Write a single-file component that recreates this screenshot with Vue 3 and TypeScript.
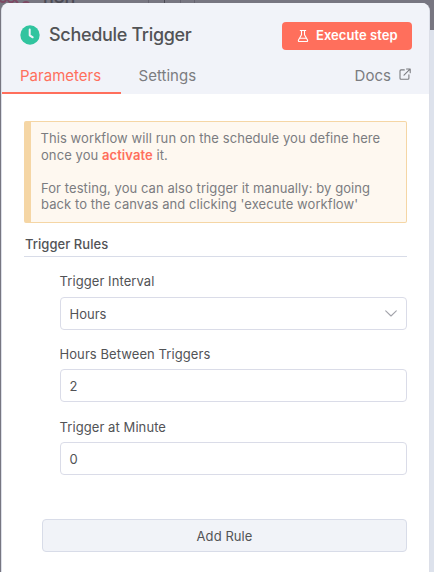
<script setup lang="ts">
import { ref } from 'vue'

interface NumberField {
  label: string
  value: string
}

const interval = ref('Hours')
const fields = ref<NumberField[]>([
  { label: 'Hours Between Triggers', value: '2' },
  { label: 'Trigger at Minute', value: '0' },
])
</script>

<template>
  <div class="screen">
    <div class="backdrop">
      <svg class="backdrop-logo" width="32" height="4" viewBox="0 0 32 4" fill="none" stroke="#7d4964" stroke-width="2">
        <circle cx="3" cy="-1" r="3" />
        <circle cx="11" cy="-1" r="3.2" />
        <path d="M15 0l3 3" />
        <circle cx="26" cy="5" r="3" />
      </svg>
      <span class="backdrop-name">n8n</span>
      <i class="tick tick-a"></i><i class="tick tick-b"></i><i class="tick tick-c"></i><i class="tick tick-d"></i>
    </div>
    <div class="side"></div>

    <section class="panel">
      <header class="header">
        <div class="title-row">
          <svg class="clock" width="20" height="20" viewBox="0 0 20 20">
            <circle cx="10" cy="10" r="9.7" fill="#31c49f" />
            <path d="M9.7 4.4v5.9l3 2" fill="none" stroke="#f1f3f9" stroke-width="2" stroke-linecap="round" stroke-linejoin="round" />
          </svg>
          <h1 class="title">Schedule Trigger</h1>
          <button class="execute" type="button">
            <svg width="12" height="14" viewBox="0 0 12 14" fill="none" stroke="currentColor" stroke-width="1.1" stroke-linecap="round" stroke-linejoin="round">
              <path d="M3.300 1.500h5.400M4.500 1.500v4.200L1.500 11.100c-.4.800 0 1.400.8 1.400h7.400c.8 0 1.200-.6.8-1.400L7.500 5.700V1.500M2.700 9.300h6.600" />
            </svg>
            <span>Execute step</span>
          </button>
        </div>
        <nav class="tabs">
          <a class="tab active">Parameters</a>
          <a class="tab">Settings</a>
          <a class="docs">
            <span>Docs</span>
            <svg width="12" height="12" viewBox="0 0 12 12" fill="none" stroke="currentColor" stroke-width="1.1" stroke-linecap="round" stroke-linejoin="round">
              <path d="M7.500 1h3.700v3.700M11 1.200L5 7.200M5.300 1.900H2Q1 1.900 1 2.900V10.200Q1 11.200 2 11.200H8.900Q9.900 11.200 9.900 10.200V6.700" />
            </svg>
          </a>
        </nav>
      </header>

      <main class="content">
        <div class="notice">
          This workflow will run on the schedule you define here<br />once you <a class="activate">activate</a> it.<br /><br />For testing, you can also trigger it manually: by going<br />back to the canvas and clicking 'execute workflow'
        </div>
        <h2 class="rules-title">Trigger Rules</h2>
        <div class="rules">
          <div class="field">
            <label class="label">Trigger Interval</label>
            <div class="control">
              <span>{{ interval }}</span>
              <svg width="12" height="7" viewBox="0 0 12 7" fill="none" stroke="#a2a3aa" stroke-width="1.1" stroke-linecap="round" stroke-linejoin="round">
                <path d="M.7.8L6 6L11.300.8" />
              </svg>
            </div>
          </div>
          <div v-for="field in fields" :key="field.label" class="field">
            <label class="label">{{ field.label }}</label>
            <div class="control">{{ field.value }}</div>
          </div>
        </div>
        <button class="add" type="button">Add Rule</button>
      </main>
    </section>
  </div>
</template>

<style>
body {
  margin: 0;
  overflow: hidden;
}
</style>

<style scoped>
* {
  box-sizing: border-box;
}
.screen {
  position: relative;
  width: 434px;
  height: 572px;
  padding: 3px 5px 0 1px;
  overflow: hidden;
  background: #777681;
  font-family: Inter, sans-serif;
  color: #525356;
}
.backdrop {
  position: absolute;
  inset: 0 0 auto;
  height: 12px;
  overflow: hidden;
}
.backdrop-logo {
  position: absolute;
  left: 0;
  top: 0;
}
.backdrop-name {
  position: absolute;
  left: 43px;
  top: -13px;
  font-size: 18px;
  line-height: 20px;
  font-weight: 500;
  letter-spacing: -0.3px;
  color: #4b4a54;
}
.tick {
  position: absolute;
  top: 0;
  width: 1px;
  height: 3px;
  background: #65636f;
}
.tick-a { left: 148px; }
.tick-b { left: 164px; background: #4b4a54; }
.tick-c { left: 180px; }
.tick-d { left: 194px; }
.side {
  position: absolute;
  top: 30px;
  right: 0;
  bottom: 0;
  width: 6px;
  background: #dde2ec;
}
.panel {
  position: relative;
  width: 429px;
  height: 569px;
  border: solid #dcdfe8;
  border-width: 0 1px;
  border-radius: 8px 8px 0 0;
  background: #fff;
  overflow: hidden;
}
.header {
  height: 91px;
  background: #f1f3f9;
}
.title-row {
  display: flex;
  align-items: center;
  height: 53px;
  padding: 12px 17px 0 18px;
}
.clock {
  margin-top: -2px;
}
.title {
  margin: -1px 0 0 9px;
  font-size: 18px;
  line-height: 24px;
  font-weight: 500;
  letter-spacing: -0.32px;
}
.execute {
  display: flex;
  align-items: center;
  gap: 7px;
  width: 130px;
  height: 28px;
  margin-left: auto;
  padding: 0 0 0 15px;
  border: 0;
  border-radius: 4px;
  background: #ff6f5c;
  color: #fff;
  font: 600 13px/20px Inter, sans-serif;
  letter-spacing: 0.05px;
}
.execute span {
  margin-top: -1px;
}
.tabs {
  display: flex;
  height: 38px;
  font-size: 15px;
  line-height: 20px;
  letter-spacing: 0.02px;
  color: #7b7c80;
}
.tab {
  padding: 10px 17.5px 0;
}
.tab.active {
  width: 119px;
  padding-left: 18px;
  border-bottom: 2px solid #ff6f5c;
  color: #ff6f5c;
}
.docs {
  display: flex;
  align-items: flex-start;
  gap: 8px;
  margin-left: auto;
  padding: 10px 18px 0 0;
}
.docs svg {
  margin-top: 2px;
}
.content {
  display: flex;
  flex-direction: column;
  padding: 27px 22px 0;
}
.notice {
  height: 102px;
  padding: 8px 0 0 10px;
  border: 1px solid #f5d6a5;
  border-left-width: 7px;
  border-radius: 2px;
  background: #fef8f0;
  font-size: 13px;
  line-height: 16.6px;
  letter-spacing: 0.075px;
  color: #7b7c80;
  white-space: nowrap;
  text-indent: -0.5px;
}
.activate {
  font-weight: 600;
  color: #ff6f5c;
}
.rules-title {
  height: 34px;
  margin: 0;
  padding: 12px 0 0 1px;
  border-bottom: 1px solid #d8dce8;
  font-size: 13px;
  line-height: 18px;
  font-weight: 500;
  letter-spacing: 0.05px;
}
.rules {
  display: flex;
  flex-direction: column;
  gap: 15px;
  padding: 15px 0 0 36px;
}
.field {
  display: flex;
  flex-direction: column;
}
.label {
  height: 24px;
  margin-left: -0.5px;
  font-size: 13px;
  line-height: 18px;
  letter-spacing: 0.08px;
}
.field:first-child .label {
  height: 25px;
}
.field:last-child {
  margin-top: 1px;
}
.control {
  display: flex;
  align-items: center;
  justify-content: space-between;
  height: 33px;
  padding: 0 9px 0 8.5px;
  border: 1px solid #dadce8;
  border-radius: 4px;
  font-size: 13px;
  line-height: 18px;
}
.add {
  height: 33px;
  margin: 44px 0 0 18px;
  border: 1px solid #d8dce8;
  border-radius: 4px;
  background: #f1f3f8;
  color: #525356;
  font: 400 13px/18px Inter, sans-serif;
  letter-spacing: 0.06px;
}
</style>
